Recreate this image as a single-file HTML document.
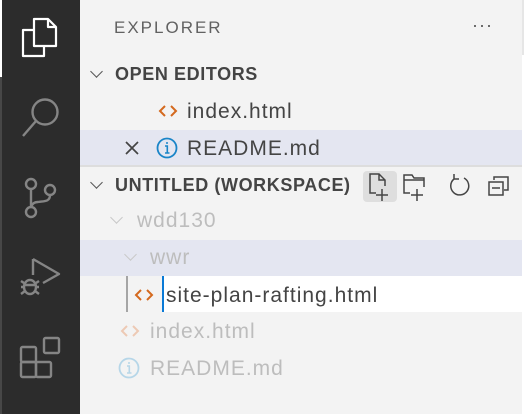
<!DOCTYPE html>
<html><head><meta charset="utf-8"><style>
*{margin:0;padding:0;box-sizing:border-box}
body{width:524px;height:414px;overflow:hidden;background:#f3f3f3;font-family:"Liberation Sans",sans-serif;position:relative}
#act{position:absolute;left:0;top:0;width:80px;height:414px;background:#2c2c2c}
#strip{position:absolute;left:0;top:77px;width:2px;height:337px;background:#474747}
#strip2{position:absolute;left:0;top:0;width:2px;height:77px;background:#fff}
.t{position:absolute;white-space:nowrap}
.row{position:absolute;left:80px;width:442px}
.h{font-weight:bold;font-size:18px;color:#444;letter-spacing:0.6px}
.i{font-size:21px;color:#444;letter-spacing:1px}
.g{color:#bdbdbd}
.chev{position:absolute;width:9px;height:9px;border-right:1.6px solid #555;border-bottom:1.6px solid #555;transform:rotate(45deg)}
.chev.g2{border-color:#c8c8c8}
</style></head><body>
<div id="act"></div><div id="strip"></div><div id="strip2"></div>
<div style="position:absolute;left:522px;top:0;width:2px;height:55px;background:#e6e6e6"></div>
<div style="position:absolute;left:522px;top:55px;width:2px;height:359px;background:#fff"></div>
<svg style="position:absolute;left:0;top:0" width="80" height="414" fill="none" stroke-linejoin="round">
<g stroke="#fff" stroke-width="2.2">
<path d="M34 19 H48 L56 27 V46 H34 Z"/><path d="M48 19 V27 H56"/>
<path d="M34 30 H23 V56 H44 V46"/>
</g>
<g stroke="#858585" stroke-width="2.4">
<circle cx="45" cy="112" r="12.5"/><path d="M36 121 L23 136"/>
<circle cx="31" cy="184" r="5"/><circle cx="50" cy="190" r="5"/><circle cx="31" cy="212" r="5"/>
<path d="M31 189 V207"/><path d="M50 195 C50 202 44 201 38 202 C34 202 32 204 31 207"/>
<path d="M33 259 L59 274 L43 283 M33 259 V275"/>
<ellipse cx="30" cy="287" rx="6" ry="7"/><path d="M24 285 H36 M21 281 L24 283 M39 281 L36 283 M21 287 H24 M36 287 H39 M21 294 L25 291 M39 294 L35 291"/>
<rect x="21" y="347" width="15" height="15" rx="1.5"/><rect x="21" y="362" width="15" height="15" rx="1.5"/><rect x="36" y="362" width="15" height="15" rx="1.5"/><rect x="44" y="338" width="15" height="15" rx="1.5"/>
</g></svg>

<div class="t" style="left:114px;top:18px;font-size:17px;color:#616161;letter-spacing:2px">EXPLORER</div>
<div class="t" style="left:472px;top:15px;font-size:18px;color:#555;letter-spacing:1px">···</div>

<div class="chev" style="left:92px;top:67px"></div>
<div class="t h" style="left:115px;top:64px">OPEN EDITORS</div>
<svg style="position:absolute;left:158px;top:103px" width="20" height="16" fill="none" stroke="#d4691e" stroke-width="2"><path d="M7 3 L2 8 L7 13 M13 3 L18 8 L13 13"/></svg>
<div class="t i" style="left:187px;top:100px">index.html</div>

<div class="row" style="top:130px;height:36px;background:#e4e6f1"></div>
<div style="position:absolute;left:80px;top:165px;width:442px;height:2px;background:#ddd"></div>
<svg style="position:absolute;left:124px;top:140px" width="16" height="16" stroke="#444" stroke-width="1.7"><path d="M2 2 L14 14 M14 2 L2 14"/></svg>
<svg style="position:absolute;left:155px;top:136px" width="24" height="24" fill="none" stroke="#1a85c8" stroke-width="1.8"><circle cx="12" cy="12" r="9.5"/><path d="M10 10 H12.3 V17 M10 17 H14.5" stroke-width="1.6"/><circle cx="12" cy="7" r="1" fill="#1a85c8" stroke="none"/></svg>
<div class="t i" style="left:187px;top:137px">README.md</div>

<div class="chev" style="left:92px;top:178px"></div>
<div class="t h" style="left:115px;top:175px">UNTITLED (WORKSPACE)</div>
<div style="position:absolute;left:363px;top:171px;width:34px;height:31px;background:#dedede;border-radius:4px"></div>
<svg style="position:absolute;left:360px;top:168px" width="164" height="36" fill="none" stroke="#444" stroke-width="1.5">
<path d="M16 25 H10 V6 H19 L25 12 V18 M19 6 V12 H25"/><path d="M22 21 V33 M16 27 H28"/>
<path d="M50 25 H44 V7 H52 L54 10 H64 V19 M44 12 H64"/><path d="M57 21 V33 M51 27 H63"/>
<path d="M104 10 A9 9 0 1 1 94 11 M94 6 V11 H99"/>
<path d="M134 12 V9 H148 V22 H144 M129 14 H143 V27 H129 Z M132 20 H140"/>
</svg>

<div class="chev g2" style="left:112px;top:213px"></div>
<div class="t i g" style="left:137px;top:209px">wdd130</div>

<div class="row" style="top:240px;height:36px;background:#e4e6f1"></div>
<div class="chev g2" style="left:126px;top:250px"></div>
<div class="t i g" style="left:150px;top:246px">wwr</div>

<div style="position:absolute;left:162px;top:276px;width:360px;height:36px;background:#fff"></div>
<div style="position:absolute;left:162px;top:276px;width:2px;height:36px;background:#0a7ad6"></div>
<div style="position:absolute;left:126px;top:276px;width:2px;height:36px;background:#a5a5a5"></div>
<svg style="position:absolute;left:134px;top:287px" width="20" height="16" fill="none" stroke="#d4691e" stroke-width="2"><path d="M7 3 L2 8 L7 13 M13 3 L18 8 L13 13"/></svg>
<div class="t i" style="left:166px;top:284px">site-plan-rafting.html</div>

<svg style="position:absolute;left:120px;top:323px" width="20" height="16" fill="none" stroke="#edc9b4" stroke-width="2"><path d="M7 3 L2 8 L7 13 M13 3 L18 8 L13 13"/></svg>
<div class="t i g" style="left:150px;top:320px">index.html</div>
<svg style="position:absolute;left:117px;top:356px" width="24" height="24" fill="none" stroke="#b6d6e8" stroke-width="1.8"><circle cx="12" cy="12" r="9.5"/><path d="M10 10 H12.3 V17 M10 17 H14.5" stroke-width="1.6"/><circle cx="12" cy="7" r="1" fill="#b6d6e8" stroke="none"/></svg>
<div class="t i g" style="left:150px;top:357px">README.md</div>
</body></html>
